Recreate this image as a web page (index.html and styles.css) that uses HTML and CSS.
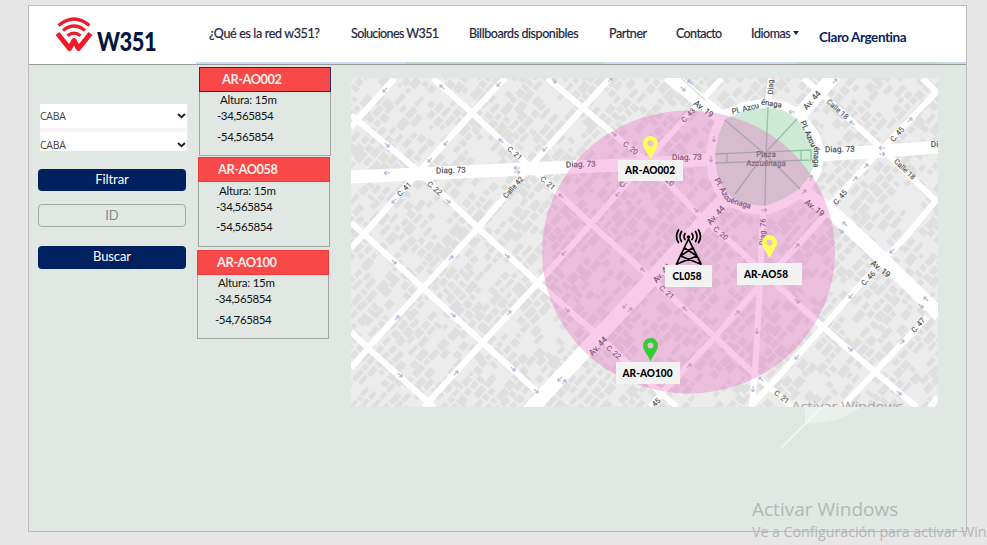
FILE: index.html
```html
<!DOCTYPE html>
<html lang="es">
<head>
<meta charset="utf-8">
<title>W351</title>
<link rel="stylesheet" href="styles.css">
</head>
<body>
<div class="app">
  <header class="header">
    <div class="logo">
      <svg class="logo-mark" width="38" height="36" viewBox="0 0 38 36" fill="none" stroke="#ee1c2b" stroke-width="3.300">
        <path d="M3.500 8.500Q19-4.500 34.500 8.500M8 13.500Q19 4.500 30 13.500M12.500 18.800Q19 13.500 25.500 18.800"/>
        <path d="M2.500 16.500L14.500 31.500L19 23.500L23.500 31.500L35.500 16.500" stroke-width="5" stroke-linejoin="round"/>
      </svg>
      <span class="logo-text">W351</span>
    </div>
    <nav class="nav">
      <a class="n1">¿Qué es la red w351?</a>
      <a class="n2">Soluciones W351</a>
      <a class="n3">Billboards disponibles</a>
      <a class="n4">Partner</a>
      <a class="n5">Contacto</a>
      <a class="n6">Idiomas<i class="caret"></i></a>
    </nav>
    <strong class="client">Claro Argentina</strong>
  </header>
  <div class="strip"></div>
  <main class="main">
    <aside class="filters">
      <div class="selects">
        <div class="select"><span>CABA</span><svg width="9" height="6" viewBox="0 0 9 6"><path d="M1 1l3.500 3.300L8 1" fill="none" stroke="#222" stroke-width="1.900"/></svg></div>
        <div class="select second"><span>CABA</span><svg width="9" height="6" viewBox="0 0 9 6"><path d="M1 1l3.500 3.300L8 1" fill="none" stroke="#222" stroke-width="1.900"/></svg></div>
      </div>
      <div class="btn filter">Filtrar</div>
      <div class="btn field">ID</div>
      <div class="btn search">Buscar</div>
    </aside>
    <section class="cards">
      <article class="card c1"><h2>AR-AO002</h2><p class="alt">Altura: 15m</p><p class="lat">-34,565854</p><p class="lon">-54,565854</p></article>
      <article class="card c2"><h2>AR-AO058</h2><p class="alt">Altura: 15m</p><p class="lat">-34,565854</p><p class="lon">-54,565854</p></article>
      <article class="card c3"><h2>AR-AO100</h2><p class="alt">Altura: 15m</p><p class="lat">-34,565854</p><p class="lon">-54,765854</p></article>
    </section>
    <svg class="map" width="587" height="372" viewBox="351 78 587 372">
      <defs>
        <clipPath id="frame"><rect x="351" y="78" width="587" height="329"/></clipPath>
        <g id="pin"><path fill-rule="evenodd" d="M0 0C-2-6-7.500-11-7.500-16A7.500 7.500 0 0 1 7.500-16C7.500-11 2-6 0 0ZM0-19A3 3 0 1 0 0-13A3 3 0 1 0 0-19Z"/></g>
      </defs>
      <path d="M805 407V423Q836 425 861 407Z" fill="#ebf0ec"/>
      <path d="M822 407L781 448" stroke="#f7f9f7" stroke-width="1.300"/>
      <g clip-path="url(#frame)">
        <rect x="351" y="78" width="587" height="329" fill="#ececec"/>
        <g id="buildings" fill="#dfdfdf"></g>
        <g class="streets">
          <path d="M351 115L357 120L417 170L478 228L538 283L595 333L663 395L677 407"/>
          <path d="M433 78L472 113L530 167L590 223L653 280L715 337L752 372L792 407"/>
          <path d="M351 223L364 234L423 288L482 342L540 394"/>
          <path d="M351 332L368 348L428 402L434 407"/>
          <path d="M547 78L583 108L623 142L648 162L697 213L735 246L775 283L823 327L875 372L917 407"/>
          <path d="M803 78L825 97L878 145L938 203M922 78L938 93M930 407L938 397"/>
          <path d="M395 78L357 120L351 127M505 78L472 113L417 174L364 234L351 248"/>
          <path d="M610 78L583 108L530 167L478 228L423 288L368 348L351 368"/>
          <path d="M722 78L690 113L648 159L590 225L538 283L482 343L424 407"/>
          <path d="M650 407L662 393L715 337L758 287L798 245L825 215"/>
          <path d="M938 198L903 240L873 270L823 327L770 386L750 407"/>
          <path d="M927 317L875 372L842 407M830 205L878 153L938 90"/>
          <path d="M763 210L760 283L755 373L752 407M771 78L768 103"/>
        </g>
        <g fill="none" stroke="#fff">
          <path d="M351 177L417 174L545 168L648 164L715 159" stroke-width="13"/>
          <path d="M815 155L870 152L938 147" stroke-width="13"/>
          <path d="M527 413L540 399L595 340L657 273L707 218L724 200" stroke-width="15"/>
          <path d="M800 114L835 75M668 75L720 117M800 190L832 212L866 243L940 315" stroke-width="14"/>
        </g>
        <path d="M768 107L785 111L797 119L811 137L816 152L813 168L808 178L799 189L783 199L765 206L747 204L732 198L723 188L717 174L715 155L718 137L725 119L745 111Z" fill="#cee9d6" stroke="#fff" stroke-width="18" stroke-linejoin="round" paint-order="stroke"/>
        <g fill="none" stroke="#8dc89f" stroke-width="1.300">
          <path d="M768 107L766 154L765 205M797 119L766 152L735 194M725 120L766 155L800 189M715 154L811 150M715 163L811 160M801 151V160M811 150V160M727 154V163"/>
          <path d="M681 78L705 100" stroke="#d5e3dc"/>
        </g>
        <g id="arrows" fill="none" stroke="#b5b9d6" stroke-width="1.100"></g>
        <g class="names">
          <text transform="translate(451 173) rotate(-2)" class="big">Diag. 73</text>
          <text transform="translate(581 167) rotate(-2)" class="big">Diag. 73</text>
          <text transform="translate(687 160) rotate(-1)" class="big">Diag. 73</text>
          <text transform="translate(840 152) rotate(-1)" class="big">Diag. 73</text>
          <text transform="translate(934.500 147)" class="big">Di</text>
          <text transform="translate(406 191) rotate(-46)">C. 41</text>
          <text transform="translate(433 190) rotate(42)">C. 22</text>
          <text transform="translate(513 155) rotate(42)">C. 21</text>
          <text transform="translate(515 189) rotate(-48)">Calle 42</text>
          <text transform="translate(546 185) rotate(42)">C. 21</text>
          <text transform="translate(629 150) rotate(38)">C. 20</text>
          <text transform="translate(665 181) rotate(42)">C. 20</text>
          <text transform="translate(690 117) rotate(-46)">C. 43</text>
          <text transform="translate(628 182) rotate(-46)">C. 43</text>
          <text transform="translate(702 111) rotate(38)" class="big">Av. 19</text>
          <text transform="translate(718 217) rotate(-48)" class="big">Av. 44</text>
          <text transform="translate(664 275) rotate(-48)" class="big">Av. 44</text>
          <text transform="translate(600 348) rotate(-46)" class="big">Av. 44</text>
          <text transform="translate(814 102) rotate(-49)" class="big">Av. 44</text>
          <text transform="translate(813 210) rotate(38)" class="big">Av. 19</text>
          <text transform="translate(879 271) rotate(38)" class="big">Av. 19</text>
          <text transform="translate(719 235) rotate(42)">C. 20</text>
          <text transform="translate(665 294) rotate(42)">C. 21</text>
          <text transform="translate(612 354) rotate(42)">C. 22</text>
          <text transform="translate(655 407) rotate(-46)">C. 45</text>
          <text transform="translate(773 86) rotate(-90)">Diag.</text>
          <text transform="translate(765 232) rotate(-88)">Diag. 76</text>
          <text transform="translate(836 111) rotate(42)">Calle 18</text>
          <text transform="translate(903 171) rotate(44)">Calle 18</text>
          <text transform="translate(899 136) rotate(-48)">C. 45</text>
          <text transform="translate(842 199) rotate(-48)">C. 45</text>
          <text transform="translate(870 280) rotate(-46)">C. 46</text>
          <text transform="translate(920 327) rotate(-48)">C. 47</text>
          <text transform="translate(780 399) rotate(38)">C. 21</text>
          <text transform="translate(746 111) rotate(-14)" class="med">Pl. Azcu</text>
          <text transform="translate(771 106) rotate(9)" class="med">énaga</text>
          <text transform="translate(806 135) rotate(66)" class="med">Pl. Azcu</text>
          <text transform="translate(814 157) rotate(93)" class="med">énaga</text>
          <text transform="translate(720 190) rotate(61)" class="med">Pl. Azc</text>
          <text transform="translate(738 205) rotate(18)" class="med">uénaga</text>
          <text x="766" y="157" class="park">Plaza</text>
          <text x="766" y="165.500" class="park">Azcuénaga</text>
          <text x="847" y="411" class="mark" textLength="111" lengthAdjust="spacingAndGlyphs">Activar Windows</text>
        </g>
        <ellipse cx="688.500" cy="252" rx="146.500" ry="141.500" fill="#e761bc" fill-opacity=".33"/>
      </g>
      <use href="#pin" x="650.500" y="159.500" fill="#ffff55"/>
      <use href="#pin" x="769.500" y="258.500" fill="#ffff55"/>
      <use href="#pin" x="650.500" y="361.500" fill="#34cb34"/>
      <g fill="none" stroke="#000" stroke-width="1.700" stroke-linecap="round">
        <path d="M688.500 239L676.500 264M688.500 239L701 264M684.500 248L697 256M692.500 248L680.500 256M680.500 256L700.500 264M697 256L677 264"/>
        <path d="M685 233.500Q683 236.500 685 239.500M692 233.500Q694 236.500 692 239.500M681.500 231.500Q678.500 236.500 681.500 241.500M695.500 231.500Q698.500 236.500 695.500 241.500M678.500 230Q674.500 236.500 678.500 242.500M698.500 230Q702.500 236.500 698.500 242.500" stroke-width="1.700"/>
      </g>
      <circle cx="688.500" cy="237" r="1.800" />
      <g fill="#f2f2f2"><rect x="618" y="160" width="65" height="21"/><rect x="665" y="265" width="47" height="22"/><rect x="737" y="263" width="65" height="22"/><rect x="616" y="362" width="64" height="22"/></g>
      <g class="tags">
        <text x="650" y="174" textLength="50" lengthAdjust="spacingAndGlyphs">AR-AO002</text>
        <text x="687" y="280" textLength="29" lengthAdjust="spacingAndGlyphs">CL058</text>
        <text x="766" y="278" textLength="44" lengthAdjust="spacingAndGlyphs">AR-AO58</text>
        <text x="647.500" y="377" textLength="50" lengthAdjust="spacingAndGlyphs">AR-AO100</text>
      </g>
    </svg>
  </main>
</div>
<div class="watermark"><div class="w1">Activar Windows</div><div class="w2">Ve a Configuración para activar Win</div></div>
<script src="map.js"></script>
</body>
</html>
```
FILE: styles.css
```css
* { box-sizing: border-box; }
body { margin: 0; padding: 5px 0 0 28px; height: 545px; overflow: hidden; background: #e6e6e6; font-family: Lato, "Liberation Sans", sans-serif; position: relative; }
.app { width: 939px; height: 527px; border: 1px solid #bdbfbe; background: #e1e8e3; }
.header { height: 56px; background: #fff; display: flex; }
.logo { width: 180px; padding: 11px 0 0 26px; display: flex; }
.logo-mark { display: block; }
.logo-text { font: 900 26px/30px Lato, sans-serif; color: #04173b; margin: 9px 0 0 4px; letter-spacing: -.6px; transform: scaleX(.84); transform-origin: left; }
.nav { display: flex; width: 610px; padding-top: 20px; }
.nav a { font-size: 12.500px; line-height: 16px; color: #22253c; white-space: nowrap; letter-spacing: -.42px; -webkit-text-stroke: .2px #22253c; }
.nav .n1 { width: 142px; letter-spacing: -.34px; }
.nav .n2 { width: 118px; letter-spacing: -.6px; }
.n3 { width: 140px; }
.n4 { width: 67px; }
.nav .n5 { width: 75px; letter-spacing: -.75px; letter-spacing: -.6px; }
.caret { display: inline-block; border: 3px solid transparent; border-top: 4px solid #22253c; border-bottom: 0; margin: 0 0 3px 3px; }
.client { font-size: 13.500px; line-height: 18px; color: #06235f; margin-top: 22px; letter-spacing: -.42px; white-space: nowrap; }
.strip { height: 3px; background: linear-gradient(90deg, #fff 167px, #cddcf6 167px 375px, #b7d8cb 378px 570px, #cddcf6 580px 765px, #b7d8cb 770px 900px, #cddcf6 920px); border-bottom: 1px solid #999; }
.main { display: flex; }
.filters { width: 168px; padding: 39px 0 0 9px; }
.selects { margin-left: 2px; width: 147px; background: #fff; height: 47px; }
.select { height: 23px; display: flex; align-items: center; justify-content: space-between; font: 10.500px "Open Sans", sans-serif; color: #444; padding-right: 1px; letter-spacing: -.3px; }
.second { height: 24px; margin-top: 1px; border-top: 4px solid #f8f4f5; padding-top: 5px; }
.btn { width: 148px; height: 23px; border-radius: 4px; background: #00205f; color: #fff; text-align: center; font-size: 13px; line-height: 21px; letter-spacing: -.1px; }
.filter { margin-top: 18px; height: 22px; }
.field { margin-top: 13px; background: transparent; border: 1px solid #a3a7a5; color: #858988; }
.search { margin-top: 19px; }
.cards { width: 154px; padding-top: 2px; }
.card { width: 132px; border: 1px solid #a0a4a2; font-size: 11.500px; line-height: 14px; color: #111; }
.card h2 { margin: -1px -1px 0; height: 25px; font-size: 12.800px; font-weight: 700; line-height: 23px; padding-left: 22px; color: #fff0ee; background: #f84848; border: 1px solid #e93b3d; letter-spacing: -.45px; }
.card p { margin: 0; white-space: nowrap; letter-spacing: -.4px; }
.c1 { margin-left: 2px; height: 89px; }
.c1 h2 { border-color: #2c2c66; }
.c2 { margin: 1px 0 0 1px; height: 90px; }
.c3 { margin: 3px 0 0; height: 89px; }
.card .alt { padding: 1px 0 0 20px; letter-spacing: -.25px; }
.card .lat { padding: 2px 0 0 17px; }
.card .lon { padding: 7px 0 0 17px; }
.c2 h2, .c3 h2 { padding-left: 19px; }
.c2 .alt { padding-top: 2px; }
.c2 .lon { padding-top: 6px; }
.map { display: block; margin-top: 13px; flex: none; }
.streets { fill: none; stroke: #fff; stroke-width: 6; }
.names { font-family: Roboto, sans-serif; font-size: 7.300px; fill: #555; text-anchor: middle; text-rendering: geometricPrecision; stroke: #555; stroke-width: .15px; }
.names .big { font-size: 8.200px; fill: #444; }
.names .med { font-size: 7.700px; fill: #444; }
.names .park { font-size: 8px; fill: #4c6956; }
.names .mark { font: 13px "Open Sans", sans-serif; fill: #aaa; stroke: none; }
.tags { font: 900 11px Lato, sans-serif; fill: #000; text-anchor: middle; }
.watermark { position: absolute; left: 752px; top: 496px; color: #b4b7b5; font-family: "Open Sans", sans-serif; white-space: nowrap; }
.w1 { font-size: 19px; line-height: 26px; }
.w2 { font-size: 14.300px; line-height: 20px; letter-spacing: -.06px; }
```
FILE: map.js
```js
const draw = (id, d, transform) => {
  const path = document.createElementNS('http://www.w3.org/2000/svg', 'path');
  path.setAttribute('d', d);
  if (transform) path.setAttribute('transform', transform);
  document.getElementById(id).appendChild(path);
};

// City blocks: small building footprints aligned with the diagonal street grid.
let seed = 351;
const rand = () => (seed = (seed * 16807) % 2147483647) / 2147483647;
let d = '';
for (let u = -340; u < 340; u += 8.5) {
  let v = -340;
  while (v < 340) {
    const w = 4 + rand() * 4.5;
    const h = 4 + rand() * 9;
    const dx = rand() * 2;
    if (rand() > 0.28) d += `M${(u + dx).toFixed(1)} ${v.toFixed(1)}h${w.toFixed(1)}v${h.toFixed(1)}h${(-w).toFixed(1)}z`;
    v += h + 1.2 + rand() * 2;
  }
}
draw('buildings', d, 'translate(644 242) rotate(42)');

// One-way markers as [x, y, angle].
[
  [385,90,-45],[442,87,42],[499,84,-45],[387,145,222],[446,143,-45],[430,160,-45],[501,141,42],[387,173,0],
  [517,168,0],[517,172,180],[394,201,-45],[448,201,222],[394,262,222],[451,258,135],[507,256,222],[397,318,135],
  [453,315,222],[509,313,135],[400,375,222],[456,373,135],[513,369,222],[536,391,222],[554,81,222],[610,80,135],
  [545,149,-45],[614,134,222],[561,196,42],[618,194,-45],[696,210,222],[564,253,-45],[567,310,222],[625,306,-45],
  [630,310,135],[643,270,42],[685,309,42],[689,366,135],[560,379,-45],[564,382,135],[683,89,222],[690,82,42],
  [714,139,-90],[711,159,-90],[835,81,135],[792,112,0],[852,123,42],[910,120,135],[882,148,0],[882,154,180],
  [866,166,135],[855,179,135],[811,178,110],[804,192,135],[764,210,180],[845,224,42],[841,231,222],[892,251,-45],
  [851,296,-45],[797,301,222],[797,246,135],[757,331,-90],[737,313,135],[797,357,-45],[850,349,222],[902,342,135],
  [926,299,42],[921,306,222],[899,393,222],[761,379,42],[753,389,-90]
].forEach(([x, y, a]) => draw('arrows', 'M-3 0H3M-3 0L-.5-2M-3 0L-.5 2', `translate(${x} ${y}) rotate(${a})`));
```
